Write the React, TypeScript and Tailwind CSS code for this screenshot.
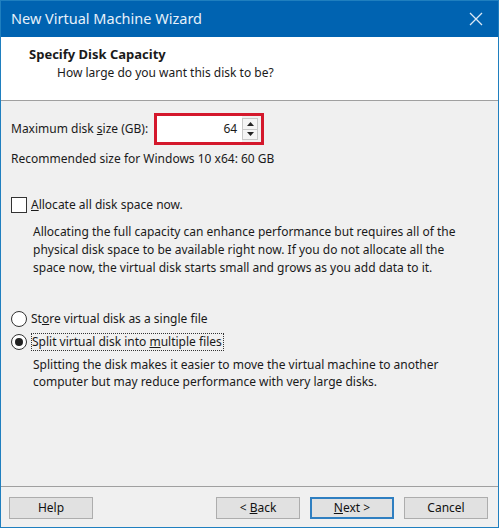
import { type FC, type ReactNode } from "react";

const font = { fontFamily: '"Noto Sans", "Open Sans", sans-serif' };

const Btn: FC<{ children: ReactNode; primary?: boolean }> = ({
	children,
	primary,
}) => (
	<button
		className={`w-[84px] h-[22px] bg-[#e1e1e1] text-[12px] text-[#111] leading-none border border-solid ${
			primary ? "border-[#2f7fc1] border-2" : "border-[#adadad]"
		}`}
	>
		{children}
	</button>
);

export default function App() {
	return (
		<div
			className="w-[499px] h-[528px] flex flex-col bg-[#f0f0f0] border border-solid border-[#1f7fbf] text-[12px] text-[#1a1a1a]"
			style={font}
		>
			<div className="h-[36px] bg-[#0063b1] flex items-center justify-between pl-[10px] pr-[14px] shrink-0">
				<span className="text-[14.5px] text-[#e6f0fa]">
					New Virtual Machine Wizard
				</span>
				<svg width="16" height="16" viewBox="0 0 16 16">
					<path
						d="M2 2 L14 14 M14 2 L2 14"
						stroke="#dbe8f5"
						strokeWidth="1.3"
						fill="none"
					/>
				</svg>
			</div>

			<div className="h-[64px] bg-white border-b border-solid border-[#a0a0a0] pt-[8px] pl-[28px] shrink-0">
				<div className="font-bold text-[13px] leading-[18px]">
					Specify Disk Capacity
				</div>
				<div className="pl-[28px] leading-[18px] mt-[1px]">
					How large do you want this disk to be?
				</div>
			</div>

			<div className="flex-1 flex flex-col pl-[10px] pr-[10px]">
				<div className="flex items-center mt-[12px] gap-[4px]">
					<span>
						Maximum disk <u>s</u>ize (GB):
					</span>
					<div className="w-[110px] h-[32px] border-[3px] border-solid border-[#d4182c] flex items-center ml-[2px]">
						<div className="flex-1 h-full bg-white flex items-center justify-end pr-[5px]">
							64
						</div>
						<div className="w-[16px] h-[22px] flex flex-col border border-solid border-[#c8c8c8] mr-[3px]">
							<div className="flex-1 flex items-center justify-center border-b border-solid border-[#c8c8c8] bg-[#f4f4f4]">
								<svg width="7" height="4" viewBox="0 0 7 4">
									<path d="M0 4 L3.5 0 L7 4 Z" fill="#222" />
								</svg>
							</div>
							<div className="flex-1 flex items-center justify-center bg-[#f4f4f4]">
								<svg width="7" height="4" viewBox="0 0 7 4">
									<path d="M0 0 L3.5 4 L7 0 Z" fill="#222" />
								</svg>
							</div>
						</div>
					</div>
				</div>
				<div className="mt-[5px] leading-[18px]">
					Recommended size for Windows 10 x64: 60 GB
				</div>

				<div className="flex items-center mt-[28px] gap-[4px]">
					<div className="w-[16px] h-[16px] border border-solid border-[#333] bg-white" />
					<span>
						<u>A</u>llocate all disk space now.
					</span>
				</div>
				<div className="pl-[22px] mt-[9px] leading-[18px]">
					Allocating the full capacity can enhance performance but requires all
					of the
					<br />
					physical disk space to be available right now. If you do not allocate
					all the
					<br />
					space now, the virtual disk starts small and grows as you add data to
					it.
				</div>

				<div className="flex items-center mt-[33px] gap-[4px]">
					<div className="w-[16px] h-[16px] rounded-full border border-solid border-[#333] bg-white" />
					<span>
						St<u>o</u>re virtual disk as a single file
					</span>
				</div>
				<div className="flex items-center mt-[5px] gap-[4px]">
					<div className="w-[16px] h-[16px] rounded-full border border-solid border-[#333] bg-white flex items-center justify-center">
						<div className="w-[8px] h-[8px] rounded-full bg-[#222]" />
					</div>
					<span className="border border-dotted border-[#333] leading-[16px] pr-[1px]">
						Split virtual disk into <u>m</u>ultiple files
					</span>
				</div>
				<div className="pl-[22px] mt-[5px] leading-[17px]">
					Splitting the disk makes it easier to move the virtual machine to
					another
					<br />
					computer but may reduce performance with very large disks.
				</div>
			</div>

			<div className="h-[41px] border-t border-solid border-[#a0a0a0] flex items-start pt-[10px] pl-[8px] pr-[10px] gap-[10px] shrink-0">
				<Btn>Help</Btn>
				<div className="flex-1" />
				<Btn>
					&lt; <u>B</u>ack
				</Btn>
				<Btn primary>
					<u>N</u>ext &gt;
				</Btn>
				<Btn>Cancel</Btn>
			</div>
		</div>
	);
}
